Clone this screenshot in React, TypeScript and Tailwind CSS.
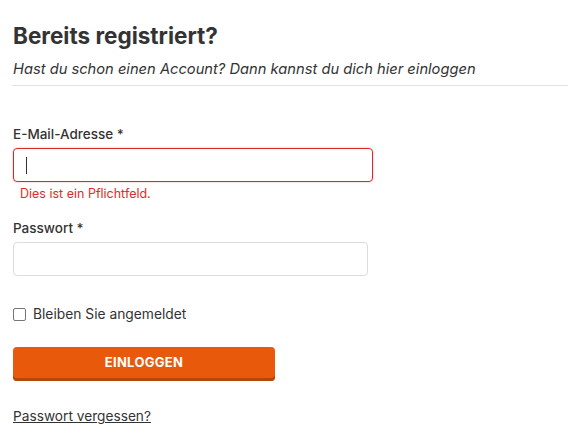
import React from 'react'

export default function App() {
  return (
    <div
      className="w-[577px] h-[436px] bg-white text-[#333] pl-[13px] pr-[9px] pt-[20px]"
      style={{ fontFamily: 'Inter, "Liberation Sans", sans-serif' }}
    >
      <h1 className="text-[22.5px] font-bold leading-[32px] text-[#333]">Bereits registriert?</h1>
      <p className="italic text-[14.7px] leading-[20px] mt-[7px] text-[#333]">
        Hast du schon einen Account? Dann kannst du dich hier einloggen
      </p>
      <div className="mt-[6px] -ml-px border-t border-[#e3e3e3]" />

      <form className="mt-[38px] flex flex-col" onSubmit={(e) => e.preventDefault()}>
        <label className="text-[13.5px] font-medium leading-[20px]">E-Mail-Adresse *</label>
        <div className="mt-[4px] w-[360px] h-[34px] rounded-[4px] border border-[#d62b2b] shadow-[0_0_2px_rgba(214,43,43,0.45)] flex items-center pl-[12px]">
          <span className="w-px h-[17px] bg-[#333]" />
        </div>
        <div className="text-[12.5px] leading-[16px] text-[#e02b27] pl-[7px] mt-[4px]">Dies ist ein Pflichtfeld.</div>

        <label className="text-[13.5px] font-medium leading-[20px] mt-[16px]">Passwort *</label>
        <div className="mt-[4px] w-[355px] h-[34px] rounded-[4px] border border-[#dcdcdc]" />

        <label className="flex items-center gap-[7px] mt-[28px] text-[13.8px] leading-[20px]">
          <span className="w-[13px] h-[13px] rounded-[2px] border border-[#767676]" />
          Bleiben Sie angemeldet
        </label>

        <button
          type="submit"
          className="mt-[23px] w-[262px] h-[34px] rounded-[4px] bg-[#e8590c] shadow-[inset_0_-3px_0_#b6470a] text-white text-[13px] font-bold tracking-[0.3px] pb-[2px]"
        >
          EINLOGGEN
        </button>

        <a href="#" className="mt-[25px] text-[13.7px] leading-[20px] underline self-start text-[#333]">
          Passwort vergessen?
        </a>
      </form>
    </div>
  )
}
